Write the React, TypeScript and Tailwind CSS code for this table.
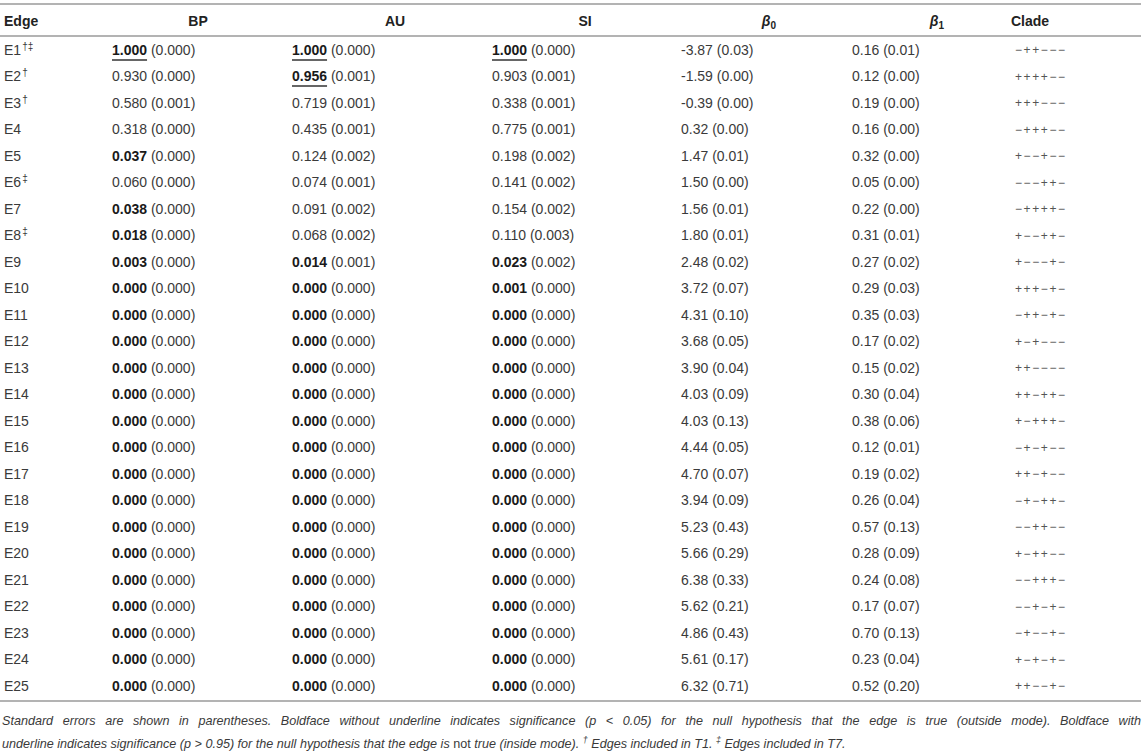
import React from "react";

type Cell = { v: string; se: string; b?: boolean; u?: boolean };
type Row = { edge: string; sup?: string; bp: Cell; au: Cell; si: Cell; b0: string; b1: string; clade: string };

const z = (): Cell => ({ v: "0.000", se: "(0.000)", b: true });

const rows: Row[] = [
  { edge: "E1", sup: "†‡", bp: { v: "1.000", se: "(0.000)", b: true, u: true }, au: { v: "1.000", se: "(0.000)", b: true, u: true }, si: { v: "1.000", se: "(0.000)", b: true, u: true }, b0: "-3.87 (0.03)", b1: "0.16 (0.01)", clade: "−++−−−" },
  { edge: "E2", sup: "†", bp: { v: "0.930", se: "(0.000)" }, au: { v: "0.956", se: "(0.001)", b: true, u: true }, si: { v: "0.903", se: "(0.001)" }, b0: "-1.59 (0.00)", b1: "0.12 (0.00)", clade: "++++−−" },
  { edge: "E3", sup: "†", bp: { v: "0.580", se: "(0.001)" }, au: { v: "0.719", se: "(0.001)" }, si: { v: "0.338", se: "(0.001)" }, b0: "-0.39 (0.00)", b1: "0.19 (0.00)", clade: "+++−−−" },
  { edge: "E4", bp: { v: "0.318", se: "(0.000)" }, au: { v: "0.435", se: "(0.001)" }, si: { v: "0.775", se: "(0.001)" }, b0: "0.32 (0.00)", b1: "0.16 (0.00)", clade: "−+++−−" },
  { edge: "E5", bp: { v: "0.037", se: "(0.000)", b: true }, au: { v: "0.124", se: "(0.002)" }, si: { v: "0.198", se: "(0.002)" }, b0: "1.47 (0.01)", b1: "0.32 (0.00)", clade: "+−−+−−" },
  { edge: "E6", sup: "‡", bp: { v: "0.060", se: "(0.000)" }, au: { v: "0.074", se: "(0.001)" }, si: { v: "0.141", se: "(0.002)" }, b0: "1.50 (0.00)", b1: "0.05 (0.00)", clade: "−−−++−" },
  { edge: "E7", bp: { v: "0.038", se: "(0.000)", b: true }, au: { v: "0.091", se: "(0.002)" }, si: { v: "0.154", se: "(0.002)" }, b0: "1.56 (0.01)", b1: "0.22 (0.00)", clade: "−++++−" },
  { edge: "E8", sup: "‡", bp: { v: "0.018", se: "(0.000)", b: true }, au: { v: "0.068", se: "(0.002)" }, si: { v: "0.110", se: "(0.003)" }, b0: "1.80 (0.01)", b1: "0.31 (0.01)", clade: "+−−++−" },
  { edge: "E9", bp: { v: "0.003", se: "(0.000)", b: true }, au: { v: "0.014", se: "(0.001)", b: true }, si: { v: "0.023", se: "(0.002)", b: true }, b0: "2.48 (0.02)", b1: "0.27 (0.02)", clade: "+−−−+−" },
  { edge: "E10", bp: z(), au: z(), si: { v: "0.001", se: "(0.000)", b: true }, b0: "3.72 (0.07)", b1: "0.29 (0.03)", clade: "+++−+−" },
  { edge: "E11", bp: z(), au: z(), si: z(), b0: "4.31 (0.10)", b1: "0.35 (0.03)", clade: "−++−+−" },
  { edge: "E12", bp: z(), au: z(), si: z(), b0: "3.68 (0.05)", b1: "0.17 (0.02)", clade: "+−+−−−" },
  { edge: "E13", bp: z(), au: z(), si: z(), b0: "3.90 (0.04)", b1: "0.15 (0.02)", clade: "++−−−−" },
  { edge: "E14", bp: z(), au: z(), si: z(), b0: "4.03 (0.09)", b1: "0.30 (0.04)", clade: "++−++−" },
  { edge: "E15", bp: z(), au: z(), si: z(), b0: "4.03 (0.13)", b1: "0.38 (0.06)", clade: "+−+++−" },
  { edge: "E16", bp: z(), au: z(), si: z(), b0: "4.44 (0.05)", b1: "0.12 (0.01)", clade: "−+−+−−" },
  { edge: "E17", bp: z(), au: z(), si: z(), b0: "4.70 (0.07)", b1: "0.19 (0.02)", clade: "++−+−−" },
  { edge: "E18", bp: z(), au: z(), si: z(), b0: "3.94 (0.09)", b1: "0.26 (0.04)", clade: "−+−++−" },
  { edge: "E19", bp: z(), au: z(), si: z(), b0: "5.23 (0.43)", b1: "0.57 (0.13)", clade: "−−++−−" },
  { edge: "E20", bp: z(), au: z(), si: z(), b0: "5.66 (0.29)", b1: "0.28 (0.09)", clade: "+−++−−" },
  { edge: "E21", bp: z(), au: z(), si: z(), b0: "6.38 (0.33)", b1: "0.24 (0.08)", clade: "−−+++−" },
  { edge: "E22", bp: z(), au: z(), si: z(), b0: "5.62 (0.21)", b1: "0.17 (0.07)", clade: "−−+−+−" },
  { edge: "E23", bp: z(), au: z(), si: z(), b0: "4.86 (0.43)", b1: "0.70 (0.13)", clade: "−+−−+−" },
  { edge: "E24", bp: z(), au: z(), si: z(), b0: "5.61 (0.17)", b1: "0.23 (0.04)", clade: "+−+−+−" },
  { edge: "E25", bp: z(), au: z(), si: z(), b0: "6.32 (0.71)", b1: "0.52 (0.20)", clade: "++−−+−" },
];

const grid = "grid grid-cols-[108px_180px_200px_188px_172px_162px_1fr]";

function Value({ c }: { c: Cell }) {
  return (
    <div className="pl-1 whitespace-nowrap">
      <span
        className={
          (c.b ? "font-bold text-[#1a1a1a] " : "") +
          (c.u ? "underline decoration-2 decoration-[#666] underline-offset-[4px]" : "")
        }
      >
        {c.v}
      </span>{" "}
      {c.se}
    </div>
  );
}

export default function App() {
  return (
    <div className="w-[1145px] bg-white pt-[3px] text-[14px] text-[#3a3a3a] font-['Liberation_Sans',Arial,sans-serif]">
      <div className="w-[1141px] border-t-2 border-[#b3b3b3]">
        <div className={grid + " h-[32px] items-center pt-[3px] border-b-2 border-[#b3b3b3] font-bold text-[#222]"}>
          <div className="pl-1">Edge</div>
          <div className="text-center">BP</div>
          <div className="text-center pl-[14px]">AU</div>
          <div className="text-center pl-[6px]">SI</div>
          <div className="text-center pl-[14px]">
            <i>β</i>
            <sub className="text-[10px]">0</sub>
          </div>
          <div className="text-center pl-[16px]">
            <i>β</i>
            <sub className="text-[10px]">1</sub>
          </div>
          <div className="pl-px">Clade</div>
        </div>
        {rows.map((r) => (
          <div key={r.edge} className={grid + " h-[26.5px] items-center"}>
            <div className="pl-1">
              {r.edge}
              {r.sup && <sup className="text-[10px] ml-px">{r.sup}</sup>}
            </div>
            <Value c={r.bp} />
            <Value c={r.au} />
            <Value c={r.si} />
            <div className="pl-[5px]">{r.b0}</div>
            <div className="pl-1">{r.b1}</div>
            <div className="pl-[5px] text-[12px] tracking-[1.6px] text-[#555]">{r.clade}</div>
          </div>
        ))}
        <div className="border-t-2 border-[#b3b3b3] pt-[8px] pl-[2px] italic text-[12.6px] leading-[23px] text-[#3a3a3a]">
          <div className="[text-align-last:justify]">
            Standard errors are shown in parentheses. Boldface without underline indicates significance (<i>p</i> &lt;
            0.05) for the null hypothesis that the edge is true (outside mode). Boldface with
          </div>
          <div>
            underline indicates significance (<i>p</i> &gt; 0.95) for the null hypothesis that the edge is{" "}
            <span className="not-italic">not</span> true (inside mode). <sup className="text-[9px]">†</sup> Edges
            included in T1. <sup className="text-[9px]">‡</sup> Edges included in T7.
          </div>
        </div>
      </div>
    </div>
  );
}
